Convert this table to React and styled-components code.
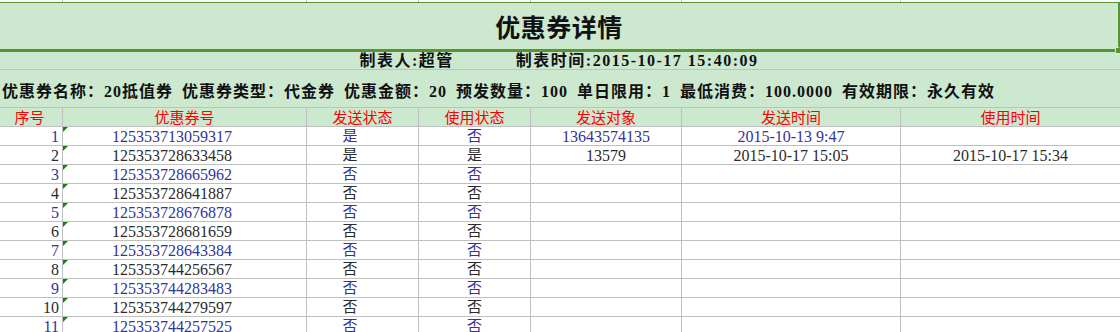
import React from "react";
import styled, { createGlobalStyle, css } from "styled-components";

const GlobalStyle = createGlobalStyle`
  html, body {
    margin: 0;
    padding: 0;
    background: #ffffff;
    overflow: hidden;
  }
`;

const COLUMNS = "63px 244px 112px 112px 151px 219px 1fr";
const SHEET_GREEN = "#cce8cf";
const SELECT_GREEN = "#579531";
const GRID = "#c0c0c0";
const LATIN = `"Liberation Serif", "Noto Sans CJK SC", serif`;
const CJK = `"Noto Sans CJK SC", "Liberation Sans", sans-serif`;

const tones = {
  blue: "#333399",
  black: "#2b2b2b",
  red: "#ff0000",
};

const Sheet = styled.div`
  width: 1120px;
  height: 332px;
  overflow: hidden;
  background: #ffffff;
  font-family: ${LATIN};
`;

const GridRow = styled.div`
  display: grid;
  grid-template-columns: ${COLUMNS};
  height: ${(p) => p.$h || 19}px;
  background: ${(p) => (p.$head ? SHEET_GREEN : "#ffffff")};
`;

const Cell = styled.div`
  position: relative;
  box-sizing: border-box;
  height: 100%;
  border-right: ${(p) => (p.$last ? "none" : `1px solid ${GRID}`)};
  border-bottom: ${(p) => (p.$edge ? "none" : `1px solid ${GRID}`)};
  padding: ${(p) => p.$pad || "1px 0 0"};
  text-align: ${(p) => p.$align || "center"};
  color: ${(p) => tones[p.$tone || "black"]};
  font-size: ${(p) => p.$size || 16}px;
  line-height: 17px;
  white-space: nowrap;

  ${(p) =>
    p.$head &&
    css`
      font-family: ${CJK};
      line-height: 18px;
      padding-top: 0;
    `}

  ${(p) =>
    p.$mark &&
    css`
      &::before {
        content: "";
        position: absolute;
        left: 0;
        top: 0;
        width: 0;
        height: 0;
        border-top: 5px solid #1b7d1b;
        border-right: 5px solid transparent;
      }
    `}
`;

const TitleBlock = styled.div`
  position: relative;
  box-sizing: border-box;
  height: 50px;
  background: ${SHEET_GREEN};
  border-top: 1px solid ${SELECT_GREEN};
  border-right: 2px solid ${SELECT_GREEN};
  border-bottom: 3px solid ${SELECT_GREEN};
  display: flex;
  align-items: center;
  justify-content: center;
  font-family: ${CJK};
  font-size: 25px;
  font-weight: 700;
  color: #111111;
  letter-spacing: 0.5px;
`;

const FillHandle = styled.span`
  position: absolute;
  right: -2px;
  bottom: -4px;
  width: 4px;
  height: 5px;
  background: ${SELECT_GREEN};
  box-shadow: -1px -1px 0 0 ${SHEET_GREEN};
`;

const MetaRow = styled.div`
  box-sizing: border-box;
  height: 18px;
  background: ${SHEET_GREEN};
  border-bottom: 1px solid ${GRID};
  display: flex;
  justify-content: center;
  gap: 62px;
  padding-right: 2px;
  font-family: ${LATIN};
  font-size: 16px;
  font-weight: 700;
  line-height: 17px;
  letter-spacing: 1.5px;
  color: #111111;
`;

const InfoRow = styled.div`
  box-sizing: border-box;
  height: 38px;
  background: ${SHEET_GREEN};
  border-bottom: 1px solid ${GRID};
  display: flex;
  align-items: center;
  gap: 9px;
  padding: 2px 0 0 2px;
  font-family: ${LATIN};
  font-size: 16px;
  font-weight: 700;
  letter-spacing: 1px;
  color: #111111;
  white-space: nowrap;
`;

const InfoItem = styled.span``;

const headers = ["序号", "优惠券号", "发送状态", "使用状态", "发送对象", "发送时间", "使用时间"];

const info = [
  "优惠券名称：20抵值券",
  "优惠券类型：代金券",
  "优惠金额：20",
  "预发数量：100",
  "单日限用：1",
  "最低消费：100.0000",
  "有效期限：永久有效",
];

const coupons = [
  { code: "125353713059317", sent: "是", used: "否", target: "13643574135", sentAt: "2015-10-13 9:47", usedAt: "" },
  { code: "125353728633458", sent: "是", used: "是", target: "13579", sentAt: "2015-10-17 15:05", usedAt: "2015-10-17 15:34" },
  { code: "125353728665962", sent: "否", used: "否" },
  { code: "125353728641887", sent: "否", used: "否" },
  { code: "125353728676878", sent: "否", used: "否" },
  { code: "125353728681659", sent: "否", used: "否" },
  { code: "125353728643384", sent: "否", used: "否" },
  { code: "125353744256567", sent: "否", used: "否" },
  { code: "125353744283483", sent: "否", used: "否" },
  { code: "125353744279597", sent: "否", used: "否" },
  { code: "125353744257525", sent: "否", used: "否" },
];

export default function App() {
  return (
    <Sheet>
      <GlobalStyle />
      <GridRow $h={2}>
        {headers.map((h, i) => (
          <Cell key={h} $edge $last={i === headers.length - 1} />
        ))}
      </GridRow>

      <TitleBlock>
        优惠券详情
        <FillHandle />
      </TitleBlock>

      <MetaRow>
        <span>制表人:超管</span>
        <span>制表时间:2015-10-17 15:40:09</span>
      </MetaRow>

      <InfoRow>
        {info.map((t) => (
          <InfoItem key={t}>{t}</InfoItem>
        ))}
      </InfoRow>

      <GridRow $head>
        {headers.map((h, i) => (
          <Cell
            key={h}
            $head
            $tone="red"
            $size={15}
            $pad={i === 0 ? "0 3px 0 0" : undefined}
            $last={i === headers.length - 1}
          >
            {h}
          </Cell>
        ))}
      </GridRow>

      {coupons.map((c, i) => {
        const tone = i % 2 === 0 ? "blue" : "black";
        return (
          <GridRow key={c.code}>
            <Cell $tone={tone} $align="right" $pad="1px 3px 0 0">
              {i + 1}
            </Cell>
            <Cell $tone={tone} $align="left" $pad="1px 0 0 49px" $mark>
              {c.code}
            </Cell>
            <Cell $tone={tone} $size={15} $pad="1px 25px 0 0">
              {c.sent}
            </Cell>
            <Cell $tone={tone} $size={15}>
              {c.used}
            </Cell>
            <Cell $tone={tone}>{c.target || ""}</Cell>
            <Cell $tone={tone}>{c.sentAt || ""}</Cell>
            <Cell $tone={tone} $last>
              {c.usedAt || ""}
            </Cell>
          </GridRow>
        );
      })}
    </Sheet>
  );
}
